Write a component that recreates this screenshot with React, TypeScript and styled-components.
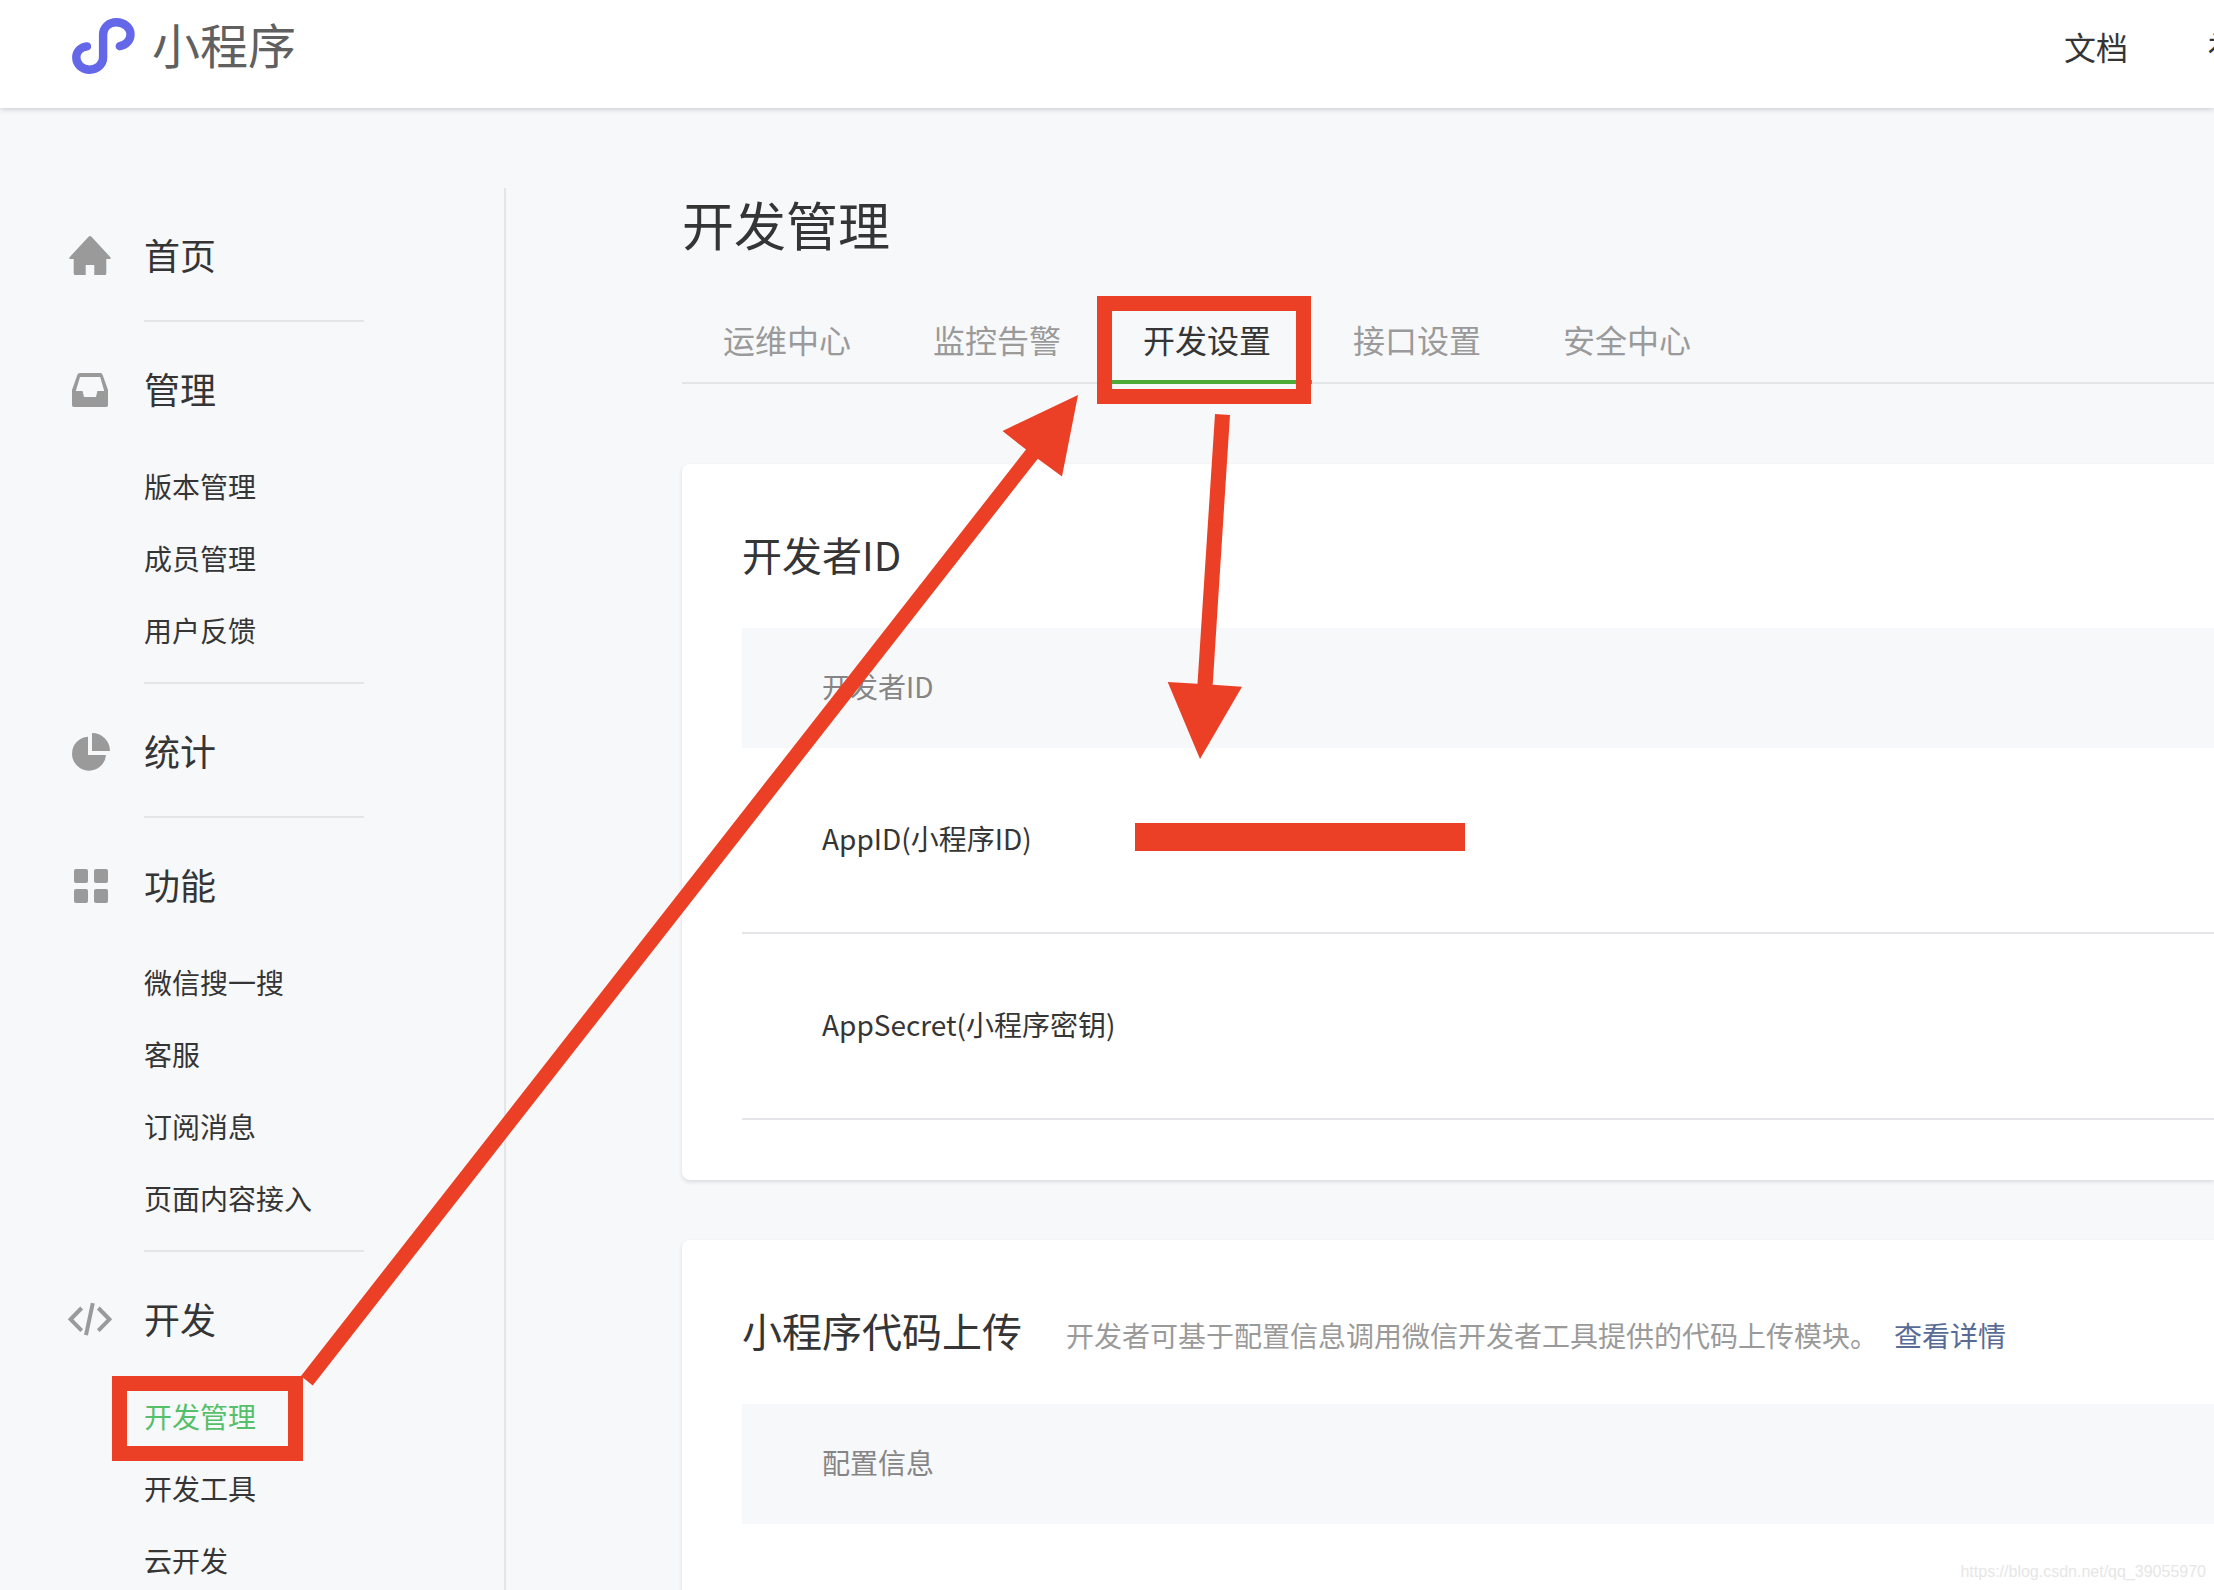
import React from "react";
import styled, { createGlobalStyle } from "styled-components";

const color = {
  page: "#f7f8fa",
  panel: "#ffffff",
  text: "#353535",
  muted: "#9a9a9a",
  head: "#858585",
  line: "#e4e5e7",
  rule: "#e4e4e9",
  icon: "#9a9a9a",
  brand: "#6467e8",
  active: "#56bf6a",
  underline: "#4fab38",
  link: "#576b95",
  mark: "#eb4025",
};

const GlobalStyle = createGlobalStyle`
  *, *::before, *::after { box-sizing: border-box; }
  body {
    margin: 0;
    background: ${color.page};
    color: ${color.text};
    font-family: "Noto Sans CJK SC", "Noto Sans", sans-serif;
    font-size: 28px;
  }
  a { color: inherit; text-decoration: none; }
  ul { list-style: none; margin: 0; padding: 0; }
  h1, h2, p { margin: 0; font-weight: 400; }
`;

const Shell = styled.div`
  position: relative;
  display: flex;
  flex-direction: column;
  height: 100vh;
  overflow: hidden;
`;

const Header = styled.header`
  position: relative;
  flex: none;
  display: flex;
  align-items: center;
  justify-content: space-between;
  height: 108px;
  padding: 0 0 16px 70px;
  background: ${color.panel};
  box-shadow: 0 1px 6px rgba(0, 0, 0, 0.2);
`;

const Brand = styled.a`
  display: flex;
  align-items: center;
  gap: 14px;
  color: #606060;
`;

const BrandName = styled.span`
  padding-bottom: 6px;
  font-size: 48px;
  line-height: 64px;
`;

const TopNav = styled.nav`
  display: flex;
  gap: 80px;
  margin-right: -58px;
  font-size: 32px;
  line-height: 48px;
  white-space: nowrap;
`;

const Body = styled.div`
  flex: 1;
  display: flex;
  min-height: 0;
  padding-top: 80px;
`;

const Sidebar = styled.nav`
  flex: none;
  width: 506px;
  padding-left: 66px;
  border-right: 2px solid ${color.line};
`;

const Section = styled.section`
  padding: 32px 0 28px;
`;

const SectionLink = styled.a`
  display: flex;
  align-items: center;
  gap: 30px;
  height: 72px;
  font-size: 36px;
`;

const SectionName = styled.span`
  padding-bottom: 4px;
`;

const SubList = styled.ul`
  margin: 24px 0 -12px 78px;
`;

const SubLink = styled.a<{ $active?: boolean }>`
  display: block;
  line-height: 72px;
  color: ${(p) => (p.$active ? color.active : color.text)};
`;

const Divider = styled.hr`
  width: 220px;
  height: 2px;
  margin: 0 0 0 78px;
  border: 0;
  background: ${color.line};
`;

const Main = styled.main`
  flex: 1;
  display: flex;
  flex-direction: column;
  min-width: 0;
  margin-left: 176px;
`;

const PageTitle = styled.h1`
  font-size: 52px;
  line-height: 72px;
`;

const Tabs = styled.div`
  display: flex;
  margin: 42px 0 80px;
  border-bottom: 2px solid ${color.line};
`;

const Tab = styled.button<{ $active?: boolean }>`
  min-width: 210px;
  height: 82px;
  margin-bottom: -2px;
  padding: 0 40px 4px;
  border: 0;
  border-bottom: 4px solid ${(p) => (p.$active ? color.underline : "transparent")};
  background: none;
  color: ${(p) => (p.$active ? color.text : color.muted)};
  font: inherit;
  font-size: 32px;
  white-space: nowrap;
  cursor: pointer;
`;

const Card = styled.section<{ $open?: boolean }>`
  flex: ${(p) => (p.$open ? "1 0 auto" : "none")};
  margin-bottom: ${(p) => (p.$open ? "0" : "60px")};
  padding: 58px 0 60px 60px;
  border-radius: ${(p) => (p.$open ? "8px 0 0 0" : "8px 0 0 8px")};
  background: ${color.panel};
  box-shadow: 0 2px 4px rgba(0, 0, 0, 0.12);
`;

const CardHead = styled.div`
  display: flex;
  align-items: baseline;
  gap: 44px;
  height: 66px;
  margin-bottom: 40px;
`;

const CardTitle = styled.h2`
  font-size: 40px;
  line-height: 64px;
`;

const CardNote = styled.p`
  display: flex;
  gap: 16px;
  color: ${color.muted};
  line-height: 40px;
  white-space: nowrap;
`;

const NoteLink = styled.a`
  color: ${color.link};
`;

const Table = styled.table`
  width: 100%;
  border-collapse: separate;
  border-spacing: 0;
`;

const HeadCell = styled.th`
  height: 120px;
  padding: 0 80px 4px;
  background: ${color.page};
  color: ${color.head};
  font-weight: 400;
  text-align: left;
`;

const Cell = styled.td`
  height: 186px;
  padding: 0 80px 4px;
  border-bottom: 2px solid ${color.rule};
`;

const Annotations = styled.svg`
  position: absolute;
  top: 0;
  left: 0;
  pointer-events: none;
`;

const Watermark = styled.span`
  position: absolute;
  right: 8px;
  bottom: 8px;
  color: #e6e6e6;
  font-family: "Liberation Sans", Arial, sans-serif;
  font-size: 16px;
  line-height: 20px;
`;

const icons = {
  home: (
    <path d="M22.8 4.5Q24 3.4 25.2 4.5L44.6 25.4Q45.4 27 43.6 27H40.3V41.4Q40.3 43 38.7 43H28.3V33H19.7V43H9.3Q7.7 43 7.7 41.4V27H4.4Q2.6 27 3.4 25.4Z" />
  ),
  inbox: (
    <path
      fillRule="evenodd"
      d="M14 7H34.5Q36 7 36.5 8.6L42 24V39.2Q42 41 40.2 41H7.8Q6 41 6 39.2V24L11.5 8.6Q12 7 14 7ZM14 11L9.8 25H16.6L18 31H30L31.4 25H38.2L34.2 11Z"
    />
  ),
  pie: (
    <path d="M22 8.7V27H40A17 17 0 1 1 22 8.7ZM26 5A18 18 0 0 1 44 23H26Z" />
  ),
  grid: (
    <>
      <rect x="8" y="7" width="14" height="14" rx="2" />
      <rect x="28" y="7" width="14" height="14" rx="2" />
      <rect x="8" y="27" width="14" height="14" rx="2" />
      <rect x="28" y="27" width="14" height="14" rx="2" />
    </>
  ),
  code: (
    <path
      fill="none"
      stroke={color.icon}
      strokeWidth="4"
      d="M15.7 12L4.6 23.3L15.7 34.6M32.3 12L43.4 23.3L32.3 34.6M26.8 7.2L20 39.2"
    />
  ),
};

type IconName = keyof typeof icons;

const Icon = ({ name }: { name: IconName }) => (
  <svg width="48" height="48" viewBox="0 0 48 48" fill={color.icon} aria-hidden="true">
    {icons[name]}
  </svg>
);

const Logo = () => (
  <svg width="68" height="60" viewBox="0 0 68 60" fill="none" aria-hidden="true">
    <path
      d="M17 30.4C10.8 31.2 6.3 35.6 6.3 41.6C6.3 48.2 12 53.7 19.6 53.7C27.2 53.7 33.1 48.2 33.1 41.6V18.4C33.1 11.6 38.9 6.2 46.5 6.2C54.1 6.2 60.5 11.6 60.5 18.4C60.5 24.4 55.8 29.2 49.8 30.2"
      stroke={color.brand}
      strokeWidth="8.4"
      strokeLinecap="round"
    />
  </svg>
);

const menu: { title: string; icon: IconName; items: string[] }[] = [
  { title: "首页", icon: "home", items: [] },
  { title: "管理", icon: "inbox", items: ["版本管理", "成员管理", "用户反馈"] },
  { title: "统计", icon: "pie", items: [] },
  { title: "功能", icon: "grid", items: ["微信搜一搜", "客服", "订阅消息", "页面内容接入"] },
  { title: "开发", icon: "code", items: ["开发管理", "开发工具", "云开发"] },
];

const tabs = ["运维中心", "监控告警", "开发设置", "接口设置", "安全中心"];

export default function App() {
  const [tab, setTab] = React.useState("开发设置");

  return (
    <>
      <GlobalStyle />
      <Shell>
        <Header>
          <Brand href="#">
            <Logo />
            <BrandName>小程序</BrandName>
          </Brand>
          <TopNav>
            <a href="#docs">文档</a>
            <a href="#community">社区</a>
          </TopNav>
        </Header>

        <Body>
          <Sidebar>
            {menu.map((group, i) => (
              <React.Fragment key={group.title}>
                {i > 0 && <Divider />}
                <Section>
                  <SectionLink href="#">
                    <Icon name={group.icon} />
                    <SectionName>{group.title}</SectionName>
                  </SectionLink>
                  {group.items.length > 0 && (
                    <SubList>
                      {group.items.map((item) => (
                        <li key={item}>
                          <SubLink href="#" $active={item === "开发管理"}>
                            {item}
                          </SubLink>
                        </li>
                      ))}
                    </SubList>
                  )}
                </Section>
              </React.Fragment>
            ))}
          </Sidebar>

          <Main>
            <PageTitle>开发管理</PageTitle>
            <Tabs role="tablist">
              {tabs.map((name) => (
                <Tab
                  key={name}
                  type="button"
                  role="tab"
                  aria-selected={name === tab}
                  $active={name === tab}
                  onClick={() => setTab(name)}
                >
                  {name}
                </Tab>
              ))}
            </Tabs>

            <Card>
              <CardHead>
                <CardTitle>开发者ID</CardTitle>
              </CardHead>
              <Table>
                <thead>
                  <tr>
                    <HeadCell scope="col">开发者ID</HeadCell>
                  </tr>
                </thead>
                <tbody>
                  <tr>
                    <Cell>AppID(小程序ID)</Cell>
                  </tr>
                  <tr>
                    <Cell>AppSecret(小程序密钥)</Cell>
                  </tr>
                </tbody>
              </Table>
            </Card>

            <Card $open>
              <CardHead>
                <CardTitle>小程序代码上传</CardTitle>
                <CardNote>
                  开发者可基于配置信息调用微信开发者工具提供的代码上传模块。
                  <NoteLink href="#">查看详情</NoteLink>
                </CardNote>
              </CardHead>
              <Table>
                <thead>
                  <tr>
                    <HeadCell scope="col">配置信息</HeadCell>
                  </tr>
                </thead>
              </Table>
            </Card>
          </Main>
        </Body>

        {/* Red tutorial marks drawn over the page */}
        <Annotations width="1480" height="1480" fill={color.mark} aria-hidden="true">
          <path fillRule="evenodd" d="M112 1376H303V1461H112ZM127 1391V1446H288V1391Z" />
          <path fillRule="evenodd" d="M1097 296H1311V404H1097ZM1112 311V389H1296V311Z" />
          <polygon points="301,1376 1026,449.5 1002.5,431 1078,395 1062,476.5 1037.8,458.7 312.7,1385.5" />
          <polygon points="1215,414 1230,415 1212.7,684.7 1242,686.7 1200,759 1167.7,682 1197.5,683.7" />
          <rect x="1135" y="823" width="330" height="28" />
        </Annotations>
        <Watermark>https://blog.csdn.net/qq_39055970</Watermark>
      </Shell>
    </>
  );
}
